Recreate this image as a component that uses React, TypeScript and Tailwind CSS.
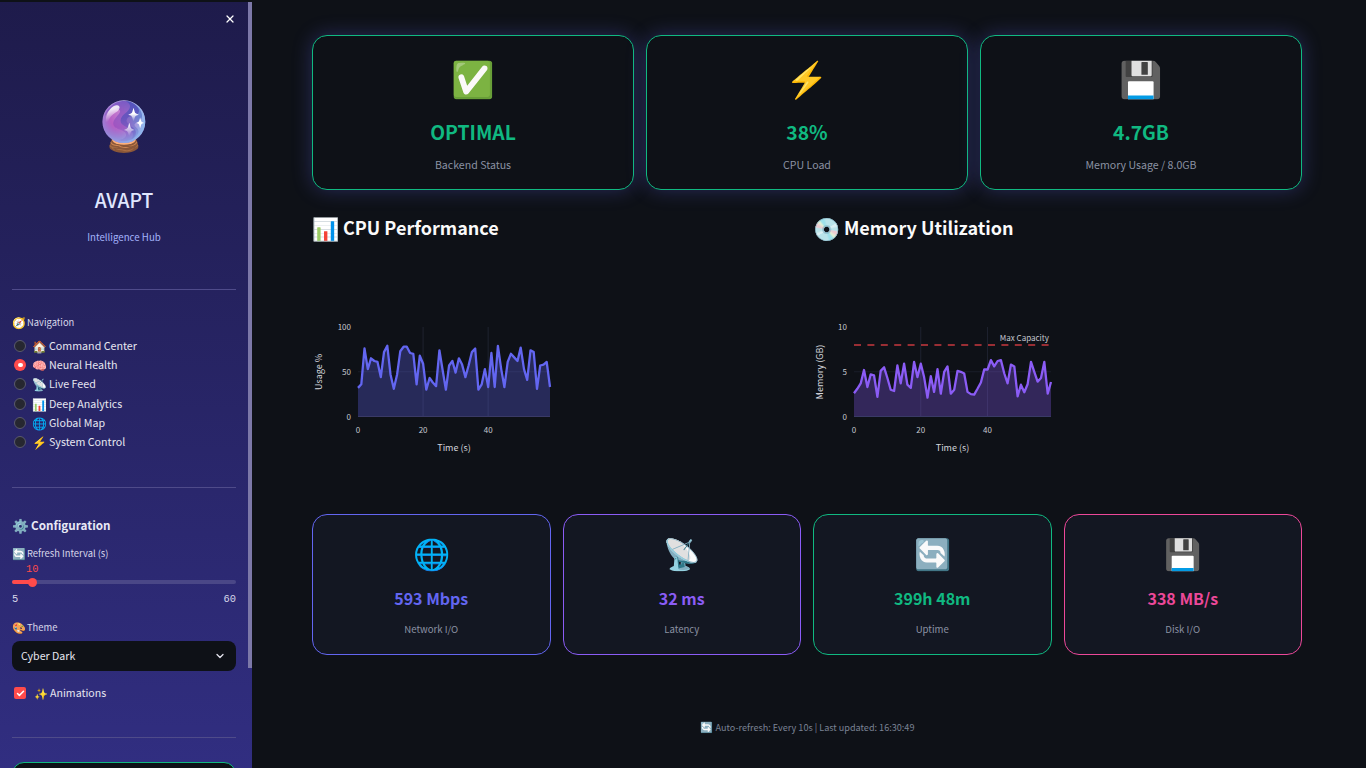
import { X, ChevronDown, Check } from "lucide-react";

const cpu = [32, 36, 76, 53, 65, 62, 61, 44, 72, 79, 47, 31, 47, 73, 78, 78, 71, 70, 36, 68, 59, 30, 43, 38, 34, 74, 52, 30, 57, 62, 49, 65, 58, 44, 57, 72, 76, 30, 36, 53, 33, 71, 33, 79, 53, 33, 61, 70, 66, 62, 77, 53, 41, 74, 72, 31, 57, 58, 61, 33];
const mem = [2.6, 3.1, 3.7, 5.2, 3.3, 4.7, 4.6, 2.2, 5.1, 5.5, 4.3, 3.0, 2.85, 5.7, 3.7, 5.9, 3.55, 3.2, 6.1, 4.4, 5.9, 4.4, 2.1, 4.5, 2.75, 5.3, 2.55, 5.0, 5.6, 2.55, 3.0, 5.1, 5.0, 4.8, 2.75, 2.5, 2.45, 3.1, 3.8, 5.25, 5.25, 6.3, 5.6, 6.2, 6.3, 4.8, 3.7, 5.8, 5.6, 2.25, 3.55, 2.7, 3.6, 6.1, 5.0, 3.9, 4.3, 6.1, 2.55, 3.85];

const nav = [
  { icon: "🏠", label: "Command Center" },
  { icon: "🧠", label: "Neural Health", active: true },
  { icon: "📡", label: "Live Feed" },
  { icon: "📊", label: "Deep Analytics" },
  { icon: "🌐", label: "Global Map" },
  { icon: "⚡", label: "System Control" },
];

const topCards = [
  { icon: "✅", value: "OPTIMAL", label: "Backend Status" },
  { icon: "⚡", value: "38%", label: "CPU Load" },
  { icon: "💾", value: "4.7GB", label: "Memory Usage / 8.0GB" },
];

const bottomCards = [
  { icon: "🌐", value: "593 Mbps", label: "Network I/O", border: "border-[#6366f1]", text: "text-[#6366f1]" },
  { icon: "📡", value: "32 ms", label: "Latency", border: "border-[#8b5cf6]", text: "text-[#8b5cf6]" },
  { icon: "🔄", value: "399h 48m", label: "Uptime", border: "border-[#10b981]", text: "text-[#10b981]" },
  { icon: "💾", value: "338 MB/s", label: "Disk I/O", border: "border-[#ec4899]", text: "text-[#ec4899]" },
];

type ChartProps = {
  data: number[];
  max: number;
  x0: number;
  x1: number;
  yLabel: string;
  yLabelX: number;
  ticks: number[];
  tickX: number;
  color: string;
  fill: string;
  limit?: boolean;
};

function Chart({ data, max, x0, x1, yLabel, yLabelX, ticks, tickX, color, fill, limit }: ChartProps) {
  const top = 77;
  const bottom = 166.5;
  const px = (i: number) => x0 + (i / (data.length - 1)) * (x1 - x0);
  const py = (v: number) => bottom - (v / max) * (bottom - top);
  const line = data.map((v, i) => `${px(i).toFixed(1)},${py(v).toFixed(1)}`).join(" ");
  const step = (x1 - x0) / 59;

  return (
    <svg width="489" height="250" className="block text-[9px]">
      {[20, 40].map((t) => (
        <line key={t} x1={x0 + t * step} x2={x0 + t * step} y1={top} y2={bottom} stroke="#1f2330" strokeWidth="1" />
      ))}
      <line x1={x0} x2={x1} y1={py(max / 2)} y2={py(max / 2)} stroke="#1a1e2a" strokeWidth="1" />
      <polygon points={`${x0},${bottom} ${line} ${x1},${bottom}`} fill={fill} />
      <line x1={x0} x2={x1} y1={bottom} y2={bottom} stroke="#3a3a66" strokeWidth="1" />
      <polyline points={line} fill="none" stroke={color} strokeWidth="2.3" strokeLinejoin="round" />
      {limit && (
        <>
          <line x1={x0} x2={x1} y1={py(8)} y2={py(8)} stroke="#c8383f" strokeWidth="1.5" strokeDasharray="7 6.4" />
          <text x={x1 - 2} y={91} textAnchor="end" fill="#c4c7cf" className="text-[8px]">Max Capacity</text>
        </>
      )}
      {ticks.map((t) => (
        <text key={t} x={tickX} y={py(t) + 3} textAnchor="end" fill="#c4c7cf" className="text-[8px]">{t}</text>
      ))}
      {[0, 20, 40].map((t) => (
        <text key={t} x={x0 + t * step} y={183} textAnchor="middle" fill="#c4c7cf" className="text-[8px]">{t}</text>
      ))}
      <text x={(x0 + x1) / 2} y={201} textAnchor="middle" fill="#d5d7dd">Time (s)</text>
      <text transform={`translate(${yLabelX} 122) rotate(-90)`} textAnchor="middle" fill="#d5d7dd">{yLabel}</text>
    </svg>
  );
}

function SideLabel({ icon, text }: { icon: string; text: string }) {
  return (
    <div className="flex h-[16px] items-center gap-[1px] text-[9.4px] leading-[16px] text-[#d8d8ea]">
      <span className="text-[11.2px]">{icon}</span>
      <span>{text}</span>
    </div>
  );
}

export default function App() {
  return (
    <div className="flex h-[768px] overflow-hidden bg-[#0e1117] font-['Noto_Sans_CJK_SC','Noto_Sans',sans-serif] text-white">
      {/* sidebar */}
      <aside className="relative mt-[2px] h-[766px] w-[252px] shrink-0 overflow-hidden bg-gradient-to-b from-[#1e1b4b] to-[#312e81] pl-3 pr-4">
        <X size={12} strokeWidth={2.5} className="absolute right-[16px] top-[11px] text-white" />
        <div className="absolute right-0 top-0 h-[666px] w-[4px] bg-[#7c78a8]" />

        <div className="flex h-[288px] flex-col items-center border-b border-[#4f4b8a]">
          <div className="mt-[88px] h-[64px] text-[48px] leading-[64px]">🔮</div>
          <div className="mt-[31px] text-[19.3px] font-medium leading-[30px] text-[#e0e7ff]">AVAPT</div>
          <div className="mt-[14px] text-[9.7px] leading-[16px] text-[#a5b4fc]">Intelligence Hub</div>
        </div>

        <div className="mt-[24px]">
          <SideLabel icon="🧭" text="Navigation" />
        </div>
        <div className="mt-[8px] flex flex-col gap-[3px]">
          {nav.map((n) => (
            <div key={n.label} className="flex h-[16.2px] items-center text-[10.7px] text-[#e6e6f0]">
              <span className={`mx-[2px] flex h-[12px] w-[12px] items-center justify-center rounded-full ${n.active ? "bg-[#ff4b4b]" : "border border-[#5a5a6c] bg-[#262730]"}`}>
                {n.active && <span className="h-[4px] w-[5px] rounded-full bg-white" />}
              </span>
              <span className="ml-[4px] text-[12px] leading-[16px]">{n.icon}</span>
              <span className="ml-[2px] leading-[16px]">{n.label}</span>
            </div>
          ))}
        </div>

        <div className="mt-[37px] h-px bg-[#4f4b8a]" />

        <div className="mt-[27px] flex h-[20px] items-center gap-[2px] text-[11.7px] font-semibold leading-[20px] text-[#e8e8f5]">
          <span className="text-[13.6px]">⚙️</span>
          <span>Configuration</span>
        </div>
        <div className="mt-[10px]">
          <SideLabel icon="🔄" text="Refresh Interval (s)" />
        </div>
        <div className="ml-[14px] mt-[1px] font-['Liberation_Mono',monospace] text-[10.4px] leading-[14px] text-[#ff4b4b]">10</div>
        <div className="relative mt-[4px] h-[4px] rounded-full bg-[#4a4787]">
          <div className="h-full w-[20px] rounded-l-full bg-[#ff4b4b]" />
          <div className="absolute left-[16px] top-[-2.5px] h-[9px] w-[9px] rounded-full bg-[#ff4b4b]" />
        </div>
        <div className="mt-[8px] flex justify-between font-['Liberation_Mono',monospace] text-[10.4px] leading-[14px] text-[#d8d8ea]">
          <span>5</span>
          <span>60</span>
        </div>

        <div className="mt-[13px]">
          <SideLabel icon="🎨" text="Theme" />
        </div>
        <div className="mt-[6px] flex h-[30px] items-center justify-between rounded-lg bg-[#0e1117] pl-[9px] pr-[10px] text-[10.6px] text-[#e6e6f0]">
          <span>Cyber Dark</span>
          <ChevronDown size={12} strokeWidth={2.5} />
        </div>
        <div className="mt-[16px] flex h-[12px] items-center text-[10.6px] text-[#e6e6f0]">
          <span className="ml-[2px] flex h-[12px] w-[12px] items-center justify-center rounded-[2px] bg-[#ff4b4b]">
            <Check size={9} strokeWidth={4} className="text-white" />
          </span>
          <span className="ml-[8px] text-[11.2px]">✨</span>
          <span className="ml-[2px]">Animations</span>
        </div>

        <div className="mt-[38px] h-px bg-[#4f4b8a]" />
        <div className="mt-[24px] h-[40px] rounded-xl border border-[#10b981] bg-[#0e1117]" />
      </aside>

      {/* main */}
      <main className="min-w-0 flex-1 pl-[60px] pr-[64px] pt-[35px]">
        <div className="grid grid-cols-3 gap-3">
          {topCards.map((c) => (
            <div key={c.label} className="flex h-[155px] flex-col items-center rounded-[15px] border border-[#10b981] bg-[#0e1117] shadow-[0_0_20px_rgba(99,102,241,0.3)]">
              <div className="mt-[11px] h-[60px] text-[35px] leading-[60px]">{c.icon}</div>
              <div className="mt-[10px] text-[19.3px] font-bold leading-[30px] text-[#10b981]">{c.value}</div>
              <div className="mt-[10px] text-[10.6px] leading-[16px] text-[#8b92a3]">{c.label}</div>
            </div>
          ))}
        </div>

        <div className="mt-[20px] grid grid-cols-2 gap-3">
          <div className="flex h-[34px] items-center gap-[4px] text-[18px] font-semibold leading-[34px] text-[#fafafa]">
            <span className="text-[22px]">📊</span>
            <span>CPU Performance</span>
          </div>
          <div className="flex h-[34px] items-center gap-[4px] text-[18px] font-semibold leading-[34px] text-[#fafafa]">
            <span className="text-[22px]">💿</span>
            <span>Memory Utilization</span>
          </div>
        </div>

        <div className="mt-[6px] grid grid-cols-2 gap-3">
          <Chart data={cpu} max={100} x0={46} x1={238} yLabel="Usage %" yLabelX={10} ticks={[0, 50, 100]} tickX={39} color="#6366f1" fill="#6366f14d" />
          <Chart data={mem} max={10} x0={41} x1={238} yLabel="Memory (GB)" yLabelX={10} ticks={[0, 5, 10]} tickX={34} color="#8b5cf6" fill="#8b5cf64d" limit />
        </div>

        <div className="mt-[14px] grid grid-cols-4 gap-3">
          {bottomCards.map((c) => (
            <div key={c.label} className={`flex h-[141px] flex-col items-center rounded-[15px] border bg-[#131722] ${c.border}`}>
              <div className="mt-[13.5px] h-[46px] text-[30px] leading-[46px]">{c.icon}</div>
              <div className={`mt-[11.5px] text-[16px] font-bold leading-[24px] ${c.text}`}>{c.value}</div>
              <div className="mt-[11px] text-[9.6px] leading-[16px] text-[#8b92a3]">{c.label}</div>
            </div>
          ))}
        </div>

        <div className="mt-[64px] flex h-[16px] items-center justify-center gap-[3px] text-[9.1px] leading-[16px] text-[#7a8294]">
          <span className="text-[10.4px]">🔄</span>
          <span>Auto-refresh: Every 10s | Last updated: 16:30:49</span>
        </div>
      </main>
    </div>
  );
}
